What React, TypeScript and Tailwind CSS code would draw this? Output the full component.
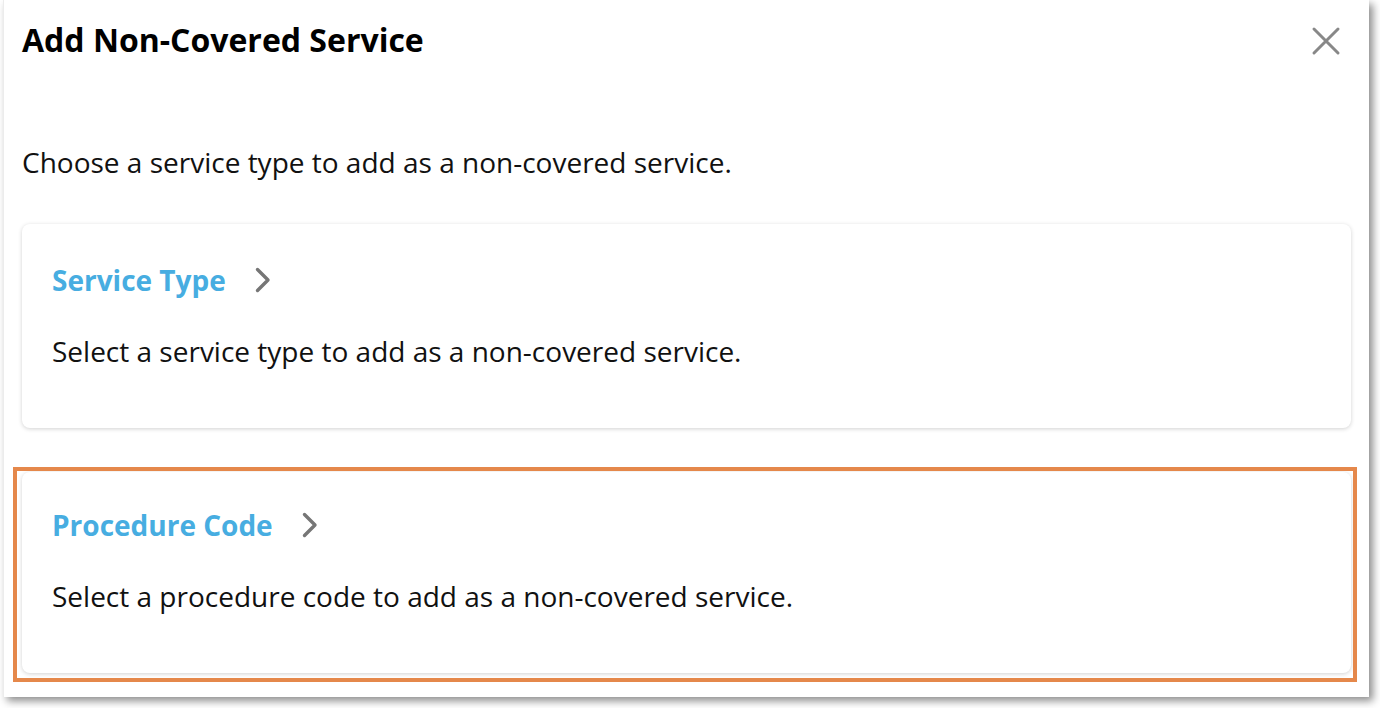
import React from "react";

const font = { fontFamily: '"Open Sans", "Noto Sans", sans-serif' };

function Chevron() {
  return (
    <svg width="17" height="26" viewBox="0 0 17 26" className="shrink-0">
      <path d="M3.5 2.5 L14 13 L3.5 23.5" fill="none" stroke="#767676" strokeWidth="3.4" strokeLinecap="round" strokeLinejoin="round" />
    </svg>
  );
}

function Card({ title, desc, top }: { title: string; desc: string; top: string }) {
  return (
    <div className={`bg-white rounded-[8px] shadow-[0_1px_4px_rgba(0,0,0,0.18)] px-[30px] pb-[57px] ${top}`}>
      <div className="flex items-center gap-[28px]">
        <span className="text-[28px] font-bold text-[#47ade1] leading-[40px]">{title}</span>
        <Chevron />
      </div>
      <div className="mt-[31px] text-[28px] text-[#111] leading-[40px]">{desc}</div>
    </div>
  );
}

export default function App() {
  return (
    <div className="w-[1380px] h-[708px] bg-white overflow-hidden" style={font}>
      <div className="ml-[3px] w-[1366px] h-[697px] bg-white border-l border-[#ececec] shadow-[4px_4px_8px_rgba(0,0,0,0.45)] px-[18px] pt-[18px] flex flex-col">
        <div className="flex items-start justify-between">
          <h1 className="text-[32px] font-bold text-black leading-[44px]">Add Non-Covered Service</h1>
          <svg width="30" height="30" viewBox="0 0 30 30" className="mt-[8px] mr-[10px]">
            <path d="M3 3 L27 27 M27 3 L3 27" stroke="#888" strokeWidth="3" strokeLinecap="round" />
          </svg>
        </div>
        <p className="mt-[80px] text-[28px] text-[#111] leading-[40px]">
          Choose a service type to add as a non-covered service.
        </p>
        <div className="mt-[42px]">
          <Card top="pt-[36px]" title="Service Type" desc="Select a service type to add as a non-covered service." />
        </div>
        <div className="mt-[44px] relative">
          <Card top="pt-[33px]" title="Procedure Code" desc="Select a procedure code to add as a non-covered service." />
          <div className="absolute -left-[9px] -right-[6px] -top-[5px] -bottom-[9px] border-[4px] border-[#e5884b] pointer-events-none" />
        </div>
      </div>
    </div>
  );
}
